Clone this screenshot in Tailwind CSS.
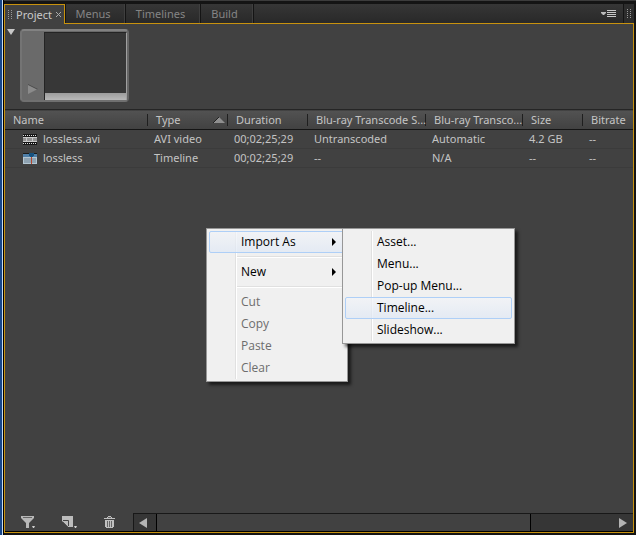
<!DOCTYPE html>
<html lang="en">
<head>
  <meta charset="UTF-8">
  <meta name="viewport" content="width=device-width, initial-scale=1.0">
  <title>Project</title>
  <script src="https://cdn.jsdelivr.net/npm/@tailwindcss/browser@4"></script>
</head>
<body class="h-screen flex overflow-hidden bg-[#141414] font-['Noto_Sans',sans-serif] text-[11px] leading-4 text-[#c4c4c4]">

  <!-- Window edge -->
  <div class="w-1 shrink-0 bg-[#17468a] border-r border-black flex justify-end">
    <div class="w-px bg-[#c5dcf2]"></div>
  </div>

  <div class="relative flex-1 min-w-0 flex flex-col pb-0.5 border-t border-[#3c3c3c]">

    <!-- Tabs -->
    <nav class="flex h-5 mt-[3px] shrink-0 text-[#858585]">
      <button class="w-[61px] shrink-0 flex items-center gap-1 pl-[3px] border border-b-0 border-[#c8920e] bg-[#414141] text-[#cacaca]">
        <svg class="w-1 h-2.5 shrink-0" viewBox="0 0 4 10" stroke="#999" stroke-dasharray="1 1"><path d="M.5 0v10M3.5 0v10"/></svg>
        <span>Project</span>
        <svg class="w-[5px] h-[5px] shrink-0" viewBox="0 0 5 5" stroke="#aaa"><path d="M0 0l5 5M5 0l-5 5"/></svg>
      </button>
      <div class="flex-1 flex mr-0.5 gap-px border-b border-[#c8920e] pl-px">
        <button class="w-[59px] pr-1 bg-linear-to-b from-[#363636] to-[#292929] border-r border-[#3f3f3f]">Menus</button>
        <button class="w-[74px] pr-1 bg-linear-to-b from-[#363636] to-[#292929] border-r border-[#3f3f3f]">Timelines</button>
        <button class="w-[52px] pr-1 bg-linear-to-b from-[#363636] to-[#292929] border-r border-[#3f3f3f]">Build</button>
        <div class="flex-1 flex items-center justify-end pr-[7px] bg-linear-to-b from-[#363636] to-[#292929]">
          <button aria-label="Panel menu">
            <svg class="w-[15px] h-2.5" viewBox="0 0 15 10"><path d="M0 3h5v1L3 6H2L0 4z" fill="#bbb"/><path d="M6 1.5h9M6 3.5h9M6 5.5h9M6 7.5h9" stroke="#c8c8c8"/></svg>
          </button>
        </div>
        <div class="w-2.5 flex items-center justify-center bg-[#2d2d2d]">
          <svg class="w-1 h-2.5" viewBox="0 0 4 10" stroke="#999" stroke-dasharray="1 1"><path d="M.5 0v10M3.5 0v10"/></svg>
        </div>
      </div>
    </nav>

    <main class="flex-1 min-h-0 flex flex-col mr-0.5 border border-t-0 border-[#c8920e] bg-[#414141]">

      <!-- Preview -->
      <section class="flex items-start gap-1 h-[85px] shrink-0 pl-0.5 pt-[5px]">
        <button aria-label="Collapse preview">
          <svg class="w-2 h-1.5" viewBox="0 0 8 6"><path d="M0 0h8L4 6z" fill="#c8c8c8"/></svg>
        </button>
        <div class="flex w-[109px] h-[73px] ml-px rounded border-2 border-t-[#828282] border-l-[#747474] border-r-[#666] border-b-[#707070] bg-[#6a6a6a]">
          <button aria-label="Play" class="w-[22px] shrink-0 flex items-end pl-1.5 pb-1.5">
            <svg class="w-2.5 h-2.5" viewBox="0 0 10 10"><path d="M0 9V0l10 5" fill="#4c4c4c"/><path d="M0 10V1l9 4.500z" fill="#8b8b8b"/></svg>
          </button>
          <div class="flex-1 flex flex-col mt-px border-t border-l border-r border-t-[#242424] border-l-[#242424] border-r-[#a0a0a0] bg-[#373737]">
            <div class="mt-auto h-[7px] bg-linear-to-b from-[#9c9c9c] to-[#b8b8b8]"></div>
          </div>
        </div>
      </section>

      <!-- Asset list -->
      <table class="w-full table-fixed border-collapse whitespace-nowrap text-left">
        <thead class="bg-linear-to-b from-[#525252] to-[#424242] border-t border-b border-t-[#252525] border-b-[#151515]">
          <tr class="h-5">
            <th class="w-[143px] p-0 font-normal"><div class="h-3 leading-3 pl-2 border-r border-[#1f1f1f]">Name</div></th>
            <th class="w-[80px] p-0 font-normal">
              <div class="h-3 leading-3 pl-2 flex items-center justify-between border-r border-[#1f1f1f]">Type
                <svg class="w-3 h-1.5 mr-0.5" viewBox="0 0 12 6"><path d="M0 6l6-6 6 6z" fill="#8f8f8f"/><path d="M0 6l6-6" stroke="#222"/></svg>
              </div>
            </th>
            <th class="w-[80px] p-0 font-normal"><div class="h-3 leading-3 pl-2 border-r border-[#1f1f1f]">Duration</div></th>
            <th class="w-[118px] p-0 font-normal"><div class="h-3 leading-3 pl-2 border-r border-[#1f1f1f]">Blu-ray Transcode S...</div></th>
            <th class="w-[97px] p-0 font-normal"><div class="h-3 leading-3 pl-2 border-r border-[#1f1f1f]">Blu-ray Transco...</div></th>
            <th class="w-[60px] p-0 font-normal"><div class="h-3 leading-3 pl-2 border-r border-[#1f1f1f]">Size</div></th>
            <th class="p-0 font-normal"><div class="h-3 leading-3 pl-2">Bitrate</div></th>
          </tr>
        </thead>
        <tbody>
          <tr class="h-[19px] border-b border-[#3b3b3b]">
            <td class="p-0 pl-[18px]">
              <div class="flex items-center gap-1.5">
                <svg class="w-3.5 h-[11px]" viewBox="0 0 14 11" shape-rendering="crispEdges"><path d="M0 0h14v11H0z" fill="#161616"/><path d="M0 1.500h14M0 9.500h14" stroke="#ddd" stroke-dasharray="1 1"/><path d="M0 3h14v5H0z" fill="#c9c9c9"/><path d="M0 4h3v3H0zM4 4h5v3H4zM10 4h4v3h-4z" fill="#919191"/></svg>
                lossless.avi
              </div>
            </td>
            <td class="p-0 pl-1.5">AVI video</td>
            <td class="p-0 pl-1.5">00;02;25;29</td>
            <td class="p-0 pl-1.5">Untranscoded</td>
            <td class="p-0 pl-1.5">Automatic</td>
            <td class="p-0 pl-1.5">4.2 GB</td>
            <td class="p-0 pl-1.5">--</td>
          </tr>
          <tr class="h-[19px] border-b border-[#3b3b3b]">
            <td class="p-0 pl-[18px]">
              <div class="flex items-center gap-1.5">
                <svg class="w-3.5 h-[11px]" viewBox="0 0 14 11" shape-rendering="crispEdges"><path d="M0 0h14v11H0z" fill="#b4c6d2"/><path d="M1 5h12v5H1z" fill="#8fa3b2"/><path d="M0 0h14v1H0z" fill="#1b1b1b"/><path d="M0 1h14v3H0z" fill="#4f7fa8"/><path d="M6 0h5v3h-1v1H7V3H6z" fill="#17527f"/><path d="M8.500 4v7" stroke="#b5452c"/></svg>
                lossless
              </div>
            </td>
            <td class="p-0 pl-1.5">Timeline</td>
            <td class="p-0 pl-1.5">00;02;25;29</td>
            <td class="p-0 pl-1.5">--</td>
            <td class="p-0 pl-1.5">N/A</td>
            <td class="p-0 pl-1.5">--</td>
            <td class="p-0 pl-1.5">--</td>
          </tr>
        </tbody>
      </table>

      <!-- Toolbar and scrollbar -->
      <footer class="mt-auto flex h-[19px] shrink-0 border-b border-black">
        <div class="w-32 shrink-0 flex items-center gap-[27px] pl-4">
          <button aria-label="Filter">
            <svg class="w-3.5 h-3" viewBox="0 0 14 12"><path d="M0 0h13v2L8 7v5H5V7L0 2z" fill="#b8b8b8"/><path d="M2 1.500h9" stroke="#666"/><path d="M11 10h3l-1 2h-1z" fill="#d0d0d0"/></svg>
          </button>
          <button aria-label="New item">
            <svg class="w-[15px] h-3" viewBox="0 0 15 12"><path d="M0 0h11v11H6L0 5z" fill="#bcbcbc"/><path d="M1 4.500h5.500V10" fill="none" stroke="#444"/><path d="M1 6l5 5" stroke="#555"/><path d="M12 10h3l-1 2h-1z" fill="#d0d0d0"/></svg>
          </button>
          <button aria-label="Delete">
            <svg class="w-[11px] h-3" viewBox="0 0 11 12"><path d="M0 3V2h3V1h1V0h3v1h1v1h3v1zM1 4h9v7H9v1H2v-1H1z" fill="#c0c0c0"/><path d="M4 1.500h3M3.500 5v6M5.500 5v6M7.500 5v6" stroke="#666"/></svg>
          </button>
        </div>
        <div class="flex-1 flex border-t border-l border-[#181818] bg-[#363636]">
          <button aria-label="Scroll left" class="w-[22px] shrink-0 flex items-center justify-center pr-1">
            <svg class="w-2 h-2.5" viewBox="0 0 8 10"><path d="M8 0v10L0 5z" fill="#b4b4b4"/></svg>
          </button>
          <div class="flex-1 flex">
            <div class="w-[81%] border-x border-black bg-[#414141]"></div>
          </div>
          <button aria-label="Scroll right" class="w-3.5 shrink-0 flex items-center">
            <svg class="w-2 h-2.5" viewBox="0 0 8 10"><path d="M0 0v10l8-5z" fill="#b4b4b4"/></svg>
          </button>
        </div>
      </footer>
    </main>

    <!-- Context menu -->
    <div role="menu" class="absolute left-[202px] top-[227px] w-[142px] p-0.5 border border-[#979797] bg-[#f0f0f0] shadow-[3px_3px_3px_#0009] font-['Open_Sans',sans-serif] text-xs text-black">
      <div class="absolute inset-y-0.5 left-7 w-0.5 border-l border-[#e0e0e0] bg-white"></div>
      <button role="menuitem" class="relative w-full h-[22px] flex items-center justify-between pl-[31px] pr-2 rounded-xs border border-[#aecff7] bg-linear-to-b from-[#f2f4f8]/70 to-[#dfe8f5]/70">
        Import As
        <svg class="w-1 h-2" viewBox="0 0 4 8"><path d="M0 0v8l4-4z"/></svg>
      </button>
      <div class="ml-7 h-2 flex items-center"><div class="w-full h-0.5 border-t border-[#e0e0e0] bg-white"></div></div>
      <button role="menuitem" class="relative w-full h-[22px] flex items-center justify-between pl-8 pr-[9px]">
        New
        <svg class="w-1 h-2" viewBox="0 0 4 8"><path d="M0 0v8l4-4z"/></svg>
      </button>
      <div class="ml-7 h-2 flex items-center"><div class="w-full h-0.5 border-t border-[#e0e0e0] bg-white"></div></div>
      <button role="menuitem" disabled class="block w-full h-[22px] pl-8 text-left text-[#6d6d6d]">Cut</button>
      <button role="menuitem" disabled class="block w-full h-[22px] pl-8 text-left text-[#6d6d6d]">Copy</button>
      <button role="menuitem" disabled class="block w-full h-[22px] pl-8 text-left text-[#6d6d6d]">Paste</button>
      <button role="menuitem" disabled class="block w-full h-[22px] pl-8 text-left text-[#6d6d6d]">Clear</button>

      <!-- Import As submenu -->
      <div role="menu" class="absolute left-[135px] -top-px w-[173px] p-0.5 border border-[#979797] bg-[#f0f0f0] shadow-[3px_3px_3px_#0009]">
        <div class="absolute inset-y-0.5 left-7 w-0.5 border-l border-[#e0e0e0] bg-white"></div>
        <button role="menuitem" class="block w-full h-[22px] pl-8 text-left">Asset...</button>
        <button role="menuitem" class="block w-full h-[22px] pl-8 text-left">Menu...</button>
        <button role="menuitem" class="block w-full h-[22px] pl-8 text-left">Pop-up Menu...</button>
        <button role="menuitem" class="relative block w-full h-[22px] pl-[31px] text-left rounded-xs border border-[#aecff7] bg-linear-to-b from-[#f2f4f8]/70 to-[#dfe8f5]/70">Timeline...</button>
        <button role="menuitem" class="block w-full h-[22px] pl-8 text-left">Slideshow...</button>
      </div>
    </div>
  </div>

</body>
</html>
